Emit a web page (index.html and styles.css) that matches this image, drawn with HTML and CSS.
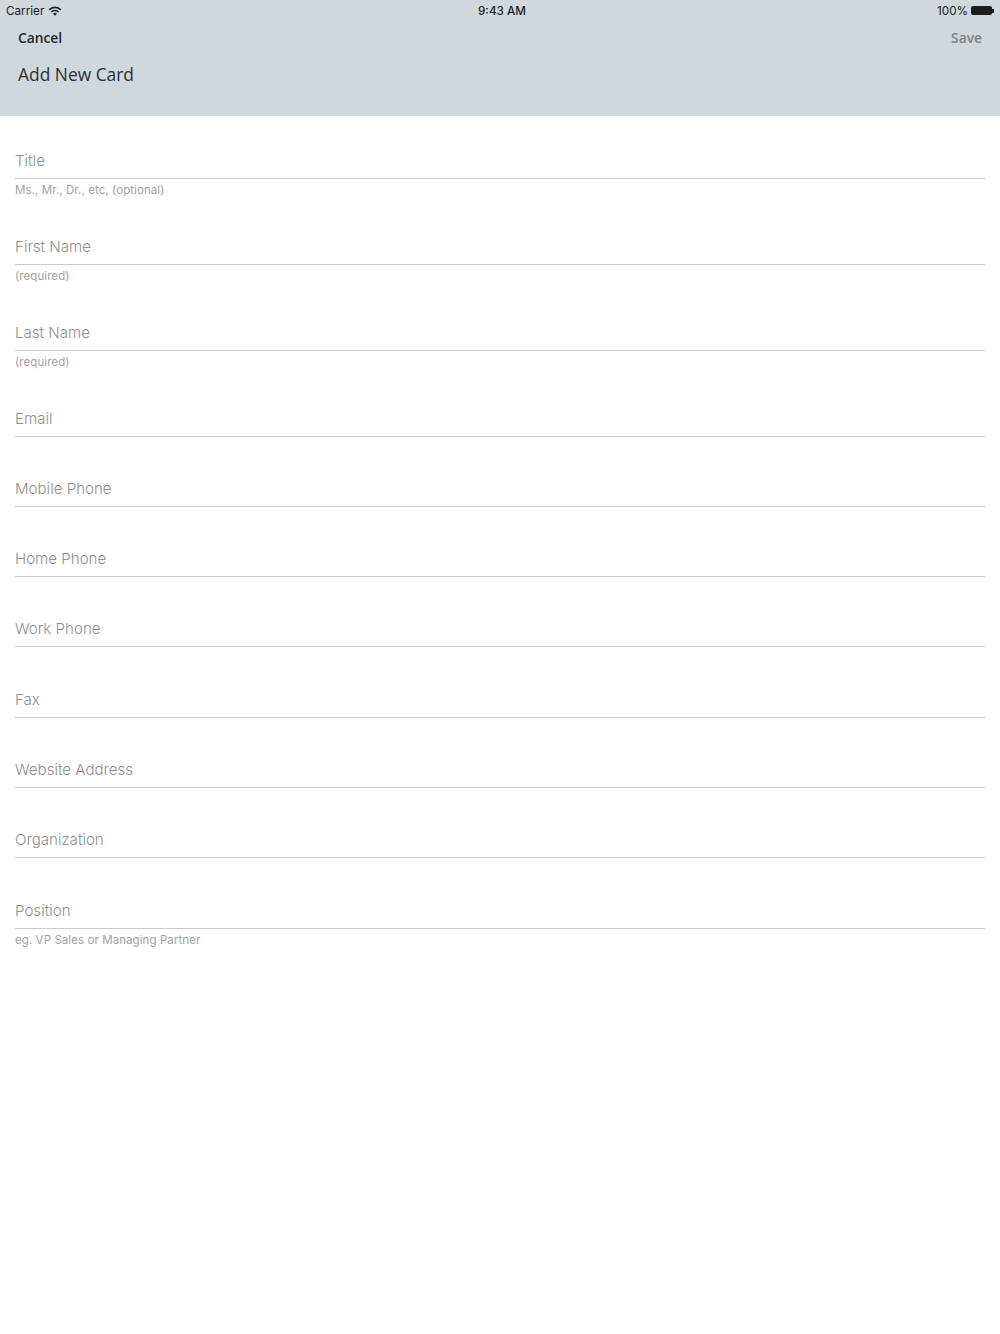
FILE: index.html
```html
<!DOCTYPE html>
<html lang="en">
	<head>
		<meta charset="UTF-8" />
		<meta name="viewport" content="width=device-width, initial-scale=1.0" />
		<title>Add New Card</title>
		<link rel="stylesheet" href="styles.css">
	</head>
	<body>
		<header class="top-bar">
			<div class="status-bar">
				<div class="status-left">
					<span>Carrier</span>
					<svg class="wifi" width="14" height="10" viewBox="0 0 14 10">
						<path d="M0.6 3.2 A9 9 0 0 1 13.4 3.2 L12.2 4.4 A7.3 7.3 0 0 0 1.8 4.4 Z" />
						<path d="M2.8 5.4 A6 6 0 0 1 11.2 5.4 L10 6.6 A4.2 4.2 0 0 0 4 6.6 Z" />
						<path d="M5 7.6 A3 3 0 0 1 9 7.6 L7 9.8 Z" />
					</svg>
				</div>
				<div class="status-time">9:43 AM</div>
				<div class="status-right">
					<span>100%</span>
					<div class="battery"></div>
					<div class="battery-tip"></div>
				</div>
			</div>
			<div class="nav-row">
				<a href="#" class="nav-cancel">Cancel</a>
				<a href="#" class="nav-save">Save</a>
			</div>
			<h1>Add New Card</h1>
		</header>

		<form class="card-form">
			<div class="field has-hint">
				<label>Title</label>
				<p class="hint">Ms., Mr., Dr., etc, (optional)</p>
			</div>
			<div class="field has-hint">
				<label>First Name</label>
				<p class="hint">(required)</p>
			</div>
			<div class="field has-hint">
				<label>Last Name</label>
				<p class="hint">(required)</p>
			</div>
			<div class="field"><label>Email</label></div>
			<div class="field"><label>Mobile Phone</label></div>
			<div class="field"><label>Home Phone</label></div>
			<div class="field"><label>Work Phone</label></div>
			<div class="field"><label>Fax</label></div>
			<div class="field"><label>Website Address</label></div>
			<div class="field"><label>Organization</label></div>
			<div class="field has-hint">
				<label>Position</label>
				<p class="hint">eg. VP Sales or Managing Partner</p>
			</div>
		</form>
	</body>
</html>
```

FILE: styles.css
```css
body,
h1,
p {
	margin: 0;
	padding: 0;
}

body {
	background-color: #ffffff;
	font-family: "Open Sans", sans-serif;
	height: 1334px;
	overflow: hidden;
}

.top-bar {
	background-color: #d1d8dd;
	height: 116px;
	box-sizing: border-box;
}

.status-bar {
	display: grid;
	grid-template-columns: 1fr auto 1fr;
	align-items: center;
	height: 20px;
	padding: 1px 6px 0;
	box-sizing: border-box;
	font-family: "Inter", "Liberation Sans", sans-serif;
	font-size: 11.7px;
	color: #1a1c1e;
}

.status-left {
	display: flex;
	align-items: center;
	gap: 4px;
}

.wifi {
	fill: #1a1c1e;
}

.status-time {
	padding-left: 4px;
	font-weight: 500;
}

.status-right {
	display: flex;
	align-items: center;
	justify-content: flex-end;
}

.battery {
	width: 21px;
	height: 9px;
	margin-left: 3px;
	background-color: #1a1c1e;
	border-radius: 2px;
}

.battery-tip {
	width: 2px;
	height: 4px;
	background-color: #1a1c1e;
}

.nav-row {
	display: flex;
	justify-content: space-between;
	align-items: center;
	height: 36px;
	padding: 0 18px 2px 18px;
	box-sizing: border-box;
	font-size: 13.8px;
	font-weight: 600;
}

.nav-row a {
	text-decoration: none;
}

.nav-cancel {
	color: #22282c;
}

.nav-save {
	color: #7b8185;
}

h1 {
	padding-top: 5px;
	padding-left: 18px;
	font-size: 17.4px;
	font-weight: 400;
	line-height: 26px;
	color: #2b3034;
}

.card-form {
	padding: 0 15px;
}

.field {
	height: 70.3px;
	box-sizing: border-box;
	font-family: "Inter", "Liberation Sans", sans-serif;
}

.has-hint {
	height: 86px;
}

.field label {
	display: flex;
	align-items: flex-end;
	height: 62.5px;
	padding-bottom: 7px;
	box-sizing: border-box;
	border-bottom: 1px solid #cbcbcb;
	font-size: 15.1px;
	font-weight: 300;
	line-height: 20px;
	color: #8f8f8f;
}

.hint {
	margin-top: 4px;
	font-size: 11.5px;
	letter-spacing: 0.08px;
	line-height: 14px;
	color: #a3a3a3;
}
```
